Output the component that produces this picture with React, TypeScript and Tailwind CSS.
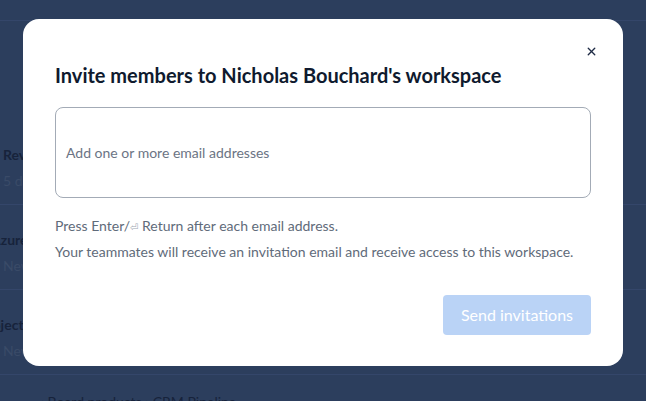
import { X } from "lucide-react";

const rows = [
  { title: "Review weekly reports", sub: "5 days ago", shift: "ml-[3px]" },
  { title: "Azure migration plan", sub: "New", shift: "-ml-[9px]" },
  { title: "Project kickoff notes", sub: "New", shift: "-ml-[21px]" },
];

function Backdrop() {
  return (
    <div className="absolute inset-0 overflow-hidden bg-[#2c3e5d]">
      <div className="h-[21px] border-b border-[#34466a]" />
      <div className="h-[99px]" />
      {rows.map((row) => (
        <div key={row.title} className="flex h-[85px] flex-col border-b border-[#34466a] pt-[25px]">
          <div className={`${row.shift} text-[14px] font-bold leading-5 text-[#17233b]`}>{row.title}</div>
          <div className="ml-[3px] mt-[6px] text-[14px] leading-5 text-[#3a4b68]">{row.sub}</div>
        </div>
      ))}
      <div className="ml-[40px] mt-[17px] text-[14px] leading-5 text-[#17233b]">‹ Board products › CRM Pipeline</div>
    </div>
  );
}

export default function App() {
  return (
    <div className="relative h-[401px] w-[646px] overflow-hidden font-['Lato','Noto_Sans',sans-serif]">
      <Backdrop />
      <div className="absolute inset-0 flex items-start justify-center pt-[19px]">
        <div className="relative w-[600px] rounded-2xl bg-white px-8 pb-[31px] pt-[42px]">
          <button className="absolute right-[24px] top-[24px] flex h-4 w-4 items-center justify-center text-[#1e2a44]">
            <X size={13} strokeWidth={2.5} />
          </button>
          <h2 className="text-[20px] font-bold leading-7 text-[#0f1a2e]">
            Invite members to Nicholas Bouchard's workspace
          </h2>
          <div className="mt-[18px] flex h-[91px] items-center rounded-lg border border-[#a3abb6] px-[10px]">
            <span className="text-[14px] text-[#6b7484]">Add one or more email addresses</span>
          </div>
          <div className="mt-4 text-[14px] leading-6 text-[#5f6b7a]">
            <p>
              Press Enter/<span className="font-['DejaVu_Sans',sans-serif] text-[10px] text-[#a0a8b4]">⏎</span> Return after each email address.
            </p>
            <p>Your teammates will receive an invitation email and receive access to this workspace.</p>
          </div>
          <div className="mt-[31px] flex justify-end">
            <button className="h-10 w-[148px] rounded bg-[#bad3f6] text-[16px] text-white">Send invitations</button>
          </div>
        </div>
      </div>
    </div>
  );
}
